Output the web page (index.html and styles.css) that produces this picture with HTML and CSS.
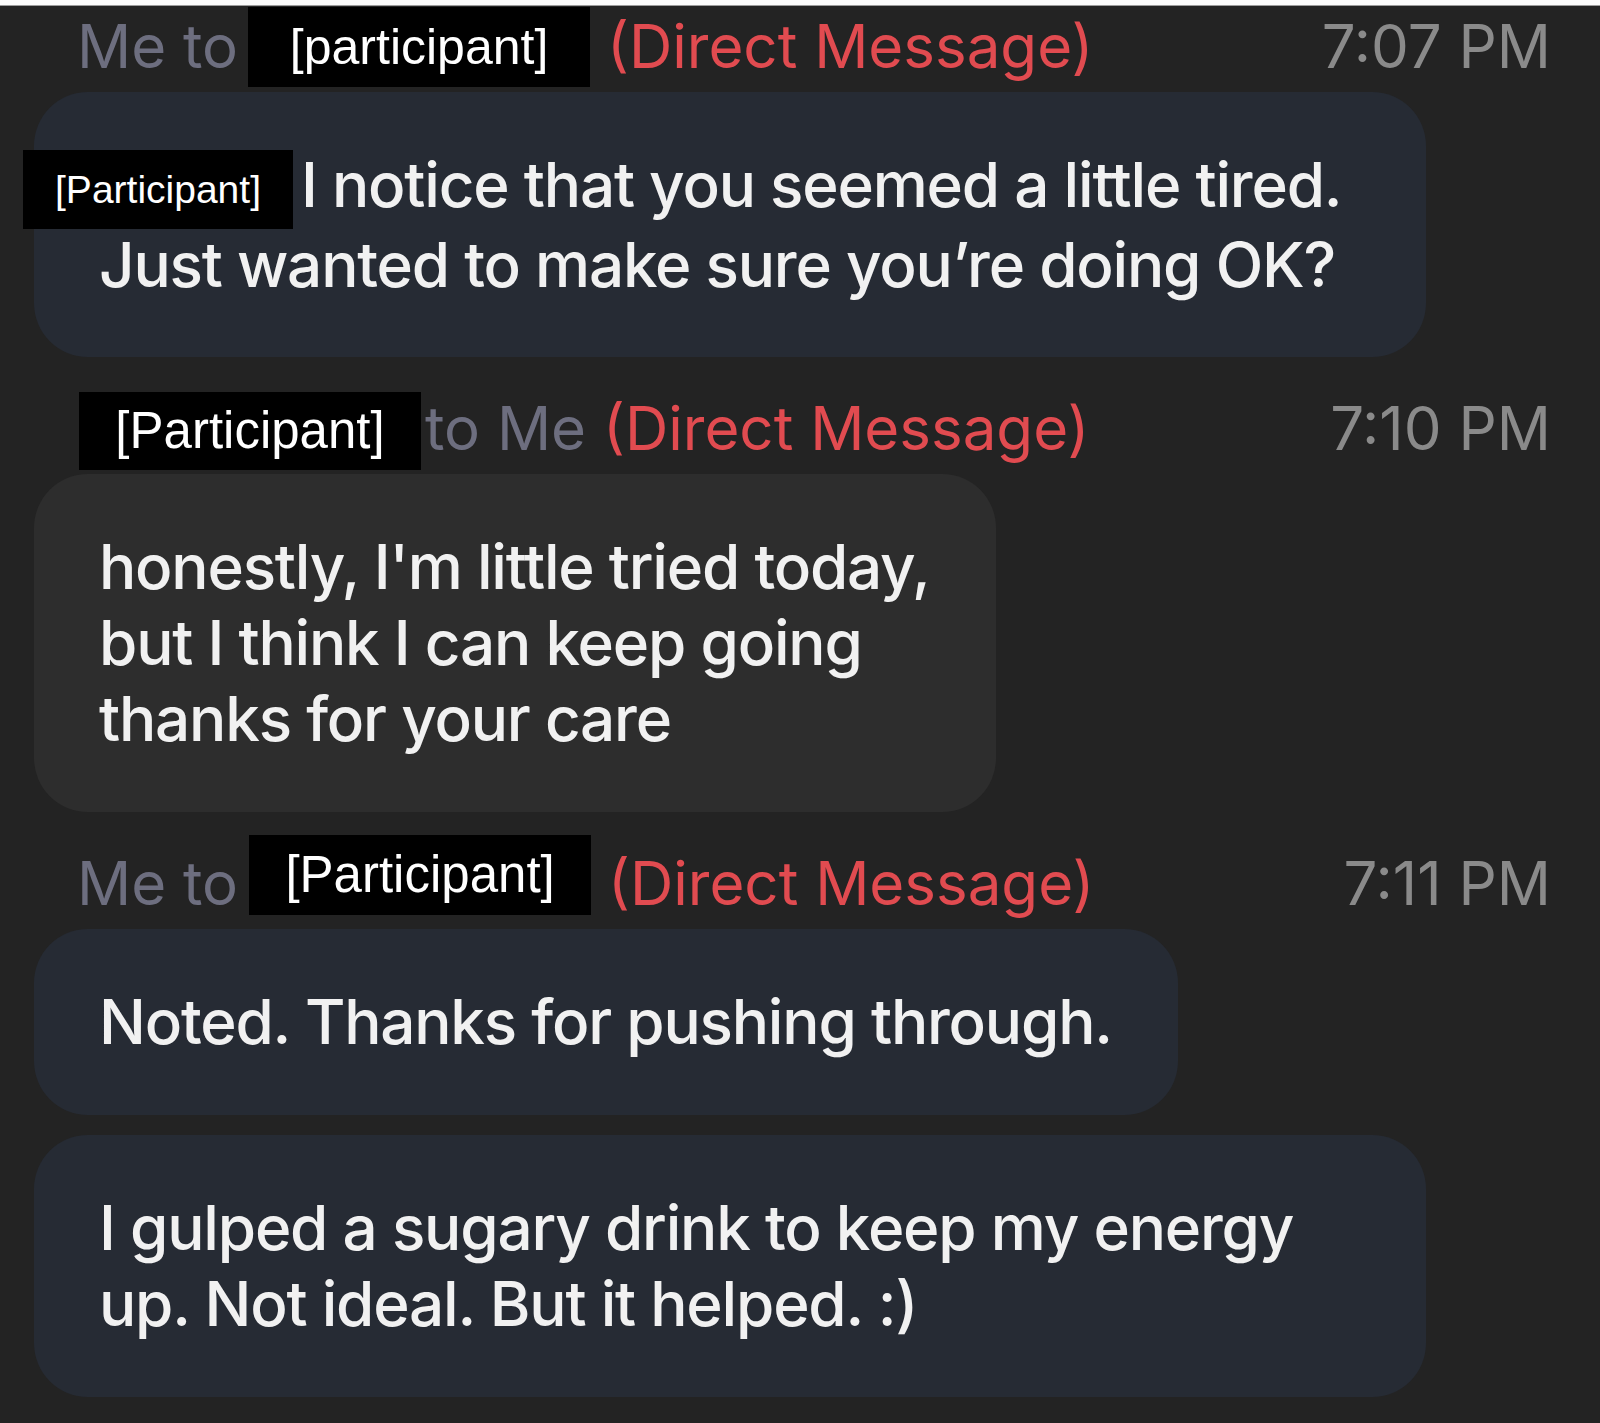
FILE: index.html
```html
<!doctype html>
<html>
	<head>
		<meta charset="utf-8" />
		<title>Chat</title>
		<meta name="viewport" content="width=device-width,initial-scale=1.0" />
		<link rel="stylesheet" href="styles.css">
	</head>
	<body>
		<div class="topbar"></div>
		<div id="chat">
			<div class="head first">
				<span class="who">Me to</span>
				<span class="redact r1">[participant]</span>
				<span class="dm">(Direct Message)</span>
				<span class="time">7:07 PM</span>
			</div>
			<div class="bubble mine wide">
				<span class="tag">[Participant]</span>I notice that you seemed a little tired.<br/>
				Just wanted to make sure you’re doing OK?
			</div>

			<div class="head">
				<span class="redact r2">[Participant]</span>
				<span class="who to">to Me</span>
				<span class="dm">(Direct Message)</span>
				<span class="time">7:10 PM</span>
			</div>
			<div class="bubble theirs">
				honestly, I'm little tried today,<br/>
				but I think I can keep going<br/>
				thanks for your care
			</div>

			<div class="head">
				<span class="who">Me to</span>
				<span class="redact r3">[Participant]</span>
				<span class="dm">(Direct Message)</span>
				<span class="time">7:11 PM</span>
			</div>
			<div class="bubble mine">
				Noted. Thanks for pushing through.
			</div>
			<div class="bubble mine next">
				I gulped a sugary drink to keep my energy up. Not ideal. But it helped. :)
			</div>
		</div>
	</body>
</html>
```
FILE: styles.css
```css
*{
	margin:0px;
	padding:0px;
	box-sizing:border-box;
}
body,html{
	width:100%;
	height:100%;
	background-color:#232323;
	overflow:hidden;
	font-family:Inter,"Liberation Sans",sans-serif;
}
.topbar{
	height:6px;
	background-color:#fbfbfb;
	border-bottom:1px solid #9c9c9c;
}
#chat{
	padding:0 49px 0 34px;
	display:flex;
	flex-direction:column;
	align-items:flex-start;
}
.head{
	width:100%;
	display:flex;
	align-items:baseline;
	padding-left:43px;
	margin-top:35px;
	margin-bottom:10px;
	font-size:60px;
	line-height:72px;
	white-space:nowrap;
}
.head.first{
	margin-top:4px;
}
.who{
	color:#6d6e7f;
}
.who.to{
	margin-left:4px;
}
.dm{
	color:#e14b50;
	margin-left:17px;
}
.time{
	margin-left:auto;
	color:#8a8a8a;
}
/* black boxes hiding the names */
.redact{
	position:relative;
	display:inline-block;
	width:342px;
	text-align:center;
	background-color:#000;
	color:#fff;
	font-family:"Liberation Sans",Arial,sans-serif;
	font-size:50px;
	line-height:80px;
	margin-bottom:-9px;
}
.redact.r1{
	top:-4px;
	margin-left:10px;
}
.redact.r2{
	top:-2px;
	margin-left:2px;
	height:78px;
	line-height:78px;
	font-size:51px;
}
.redact.r3{
	top:-13px;
	margin-left:11px;
	font-size:51px;
}
.bubble{
	max-width:1392px;
	padding:55px 66px 55px 65px;
	border-radius:54px;
	color:#f1f1f1;
	font-size:62px;
	line-height:76px;
	font-weight:500;
	letter-spacing:-1.2px;
}
.bubble.wide{
	width:1392px;
	padding-bottom:54px;
}
.bubble.mine{
	background-color:#262b34;
}
.bubble.theirs{
	background-color:#2d2d2d;
}
.bubble.next{
	margin-top:20px;
}
.tag{
	display:inline-block;
	width:270px;
	height:79px;
	margin:-2px 8px -2px -76px;
	vertical-align:4px;
	background-color:#000;
	color:#fff;
	font-family:"Liberation Sans",Arial,sans-serif;
	font-size:39px;
	font-weight:400;
	letter-spacing:0;
	line-height:79px;
	text-align:center;
}
```
